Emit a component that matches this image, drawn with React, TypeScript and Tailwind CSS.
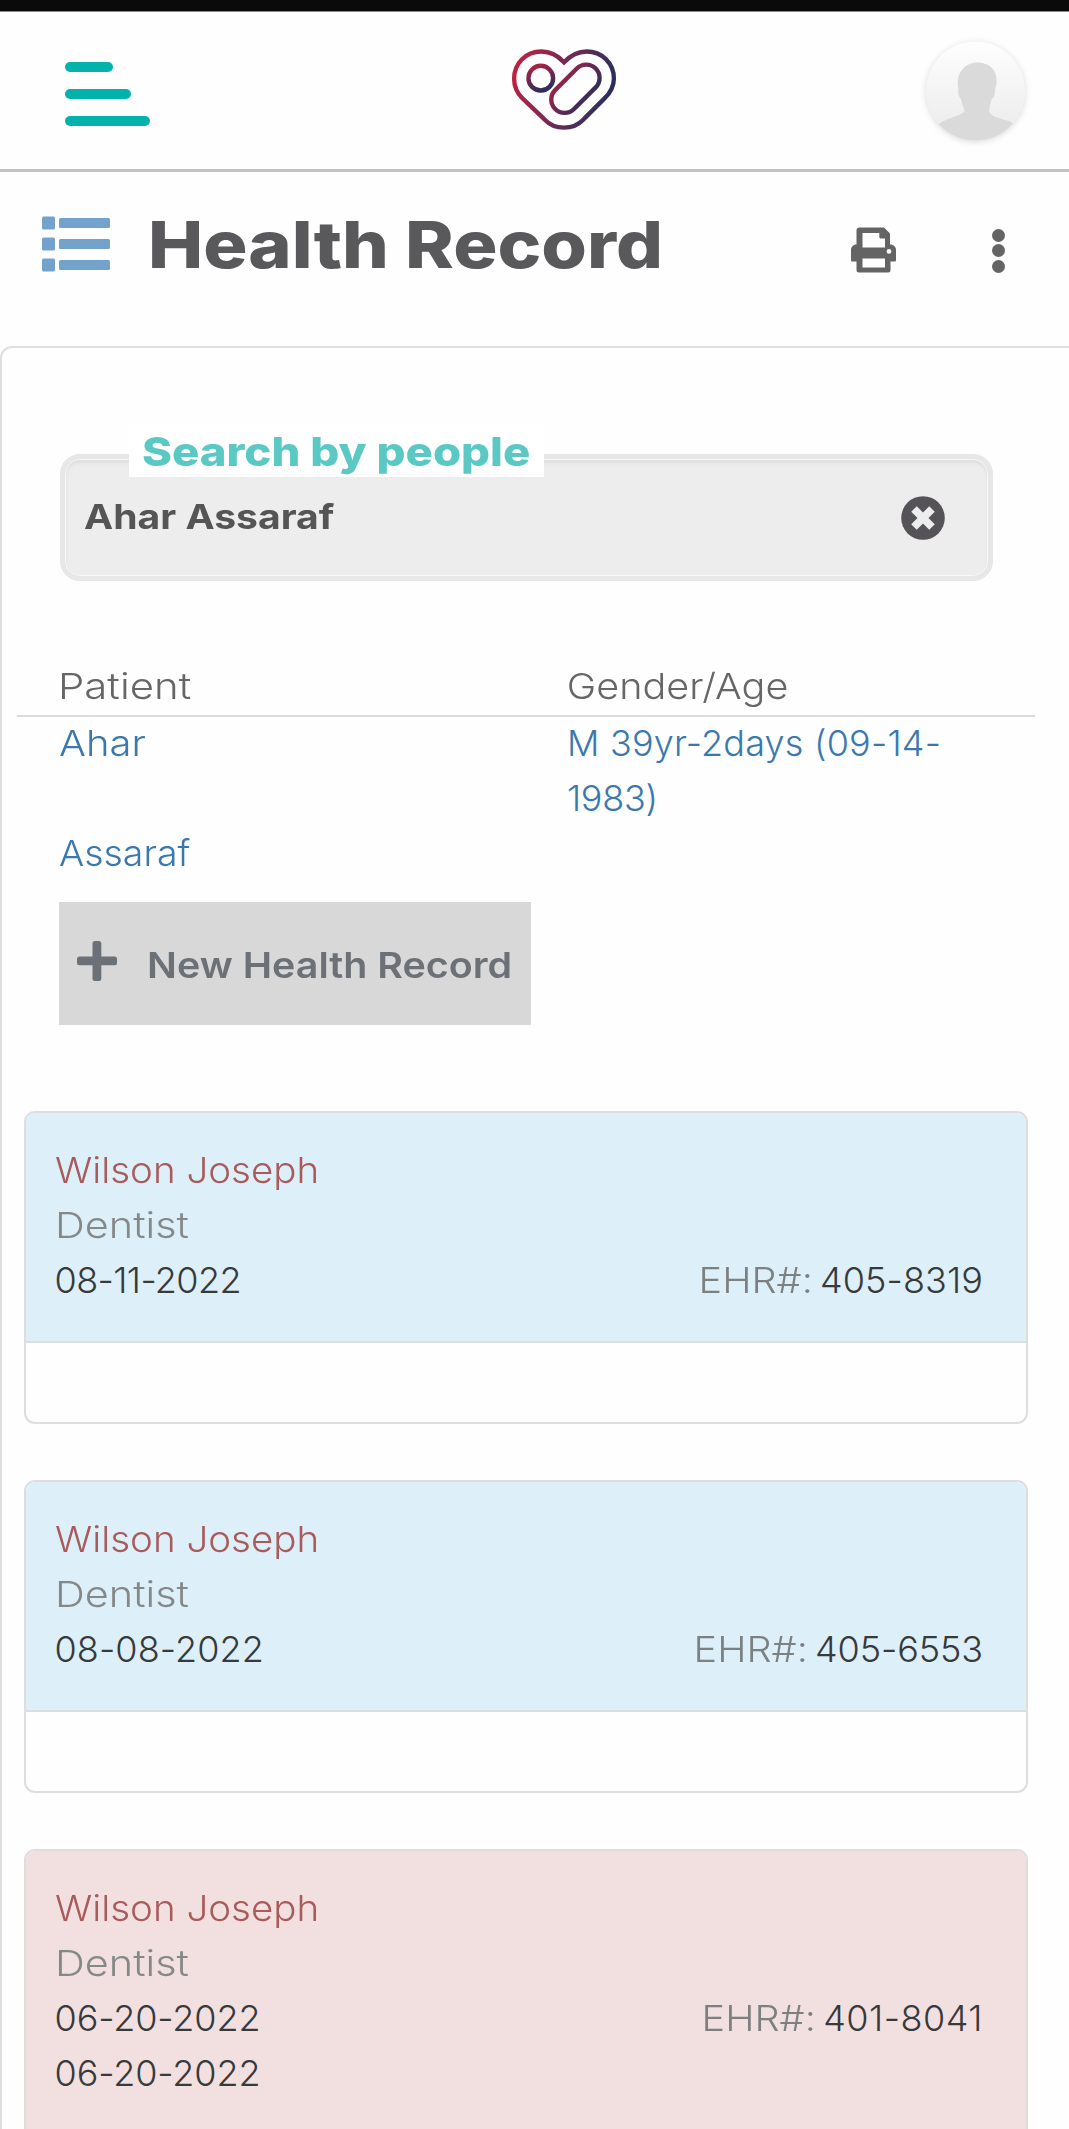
import React from 'react'

const records = [
  {
    doctor: 'Wilson Joseph',
    role: 'Dentist',
    dates: ['08-11-2022'],
    dateTracking: 'tracking-[-0.6px]',
    ehr: '405-8319',
    ehrTracking: 'tracking-[0.1px]',
    tone: 'bg-[#ddeff9]',
  },
  {
    doctor: 'Wilson Joseph',
    role: 'Dentist',
    dates: ['08-08-2022'],
    dateTracking: 'tracking-[0.1px]',
    ehr: '405-6553',
    ehrTracking: 'tracking-[-0.1px]',
    tone: 'bg-[#ddeff9]',
  },
  {
    doctor: 'Wilson Joseph',
    role: 'Dentist',
    dates: ['06-20-2022', '06-20-2022'],
    dateTracking: 'tracking-[-0.1px]',
    ehr: '401-8041',
    ehrTracking: 'tracking-[0.5px]',
    tone: 'bg-[#f2e0e0]',
  },
]

export default function App() {
  return (
    <div className="h-[2129px] w-[1069px] overflow-hidden bg-[#fefefe] font-['Inter','Liberation_Sans',sans-serif] text-[36px] leading-[55px] font-light">
      <div className="h-3 border-b border-[#8a8a8a] bg-[#0a0a0a]" />
      <TopBar />
      <TitleBar />
      <main className="h-[1900px] rounded-tl-[12px] border-t-[2px] border-l-[2px] border-[#dfdfdf]">
        <SearchField value="Ahar Assaraf" />
        <PatientTable />
        <button className="mt-[21px] ml-[57px] flex h-[123px] w-[472px] items-center bg-[#d8d8d8] pl-[18px] font-semibold text-[#6c7178]">
          <PlusIcon />
          <span className="mt-1 ml-[30px] origin-left scale-x-[1.095] whitespace-nowrap">New Health Record</span>
        </button>
        <div className="mt-[86px] ml-[21.5px] flex w-[1004.5px] flex-col gap-[56px]">
          {records.map((r, i) => (
            <RecordCard key={i} record={r} />
          ))}
        </div>
      </main>
    </div>
  )
}

function TopBar() {
  return (
    <header className="flex h-[160px] items-start justify-between border-b-[3px] border-[#c2c2c2] pr-[43px] pl-[65px]">
      <div className="mt-[50px] flex w-[446px] flex-col gap-[17px]">
        <span className="h-[10px] w-[48px] rounded-full bg-[#04b2ac]" />
        <span className="h-[10px] w-[66px] rounded-full bg-[#04b2ac]" />
        <span className="h-[10px] w-[85px] rounded-full bg-[#04b2ac]" />
      </div>
      <Logo />
      <div className="flex w-[409px] justify-end">
        <Avatar />
      </div>
    </header>
  )
}

function TitleBar() {
  return (
    <div className="flex h-[174px] items-start pl-[42px]">
      <ListIcon />
      <h1 className="mt-10 ml-[38px] w-[699px] text-[65px] leading-[65px] font-extrabold text-[#59595b]">
        <span className="inline-block origin-left scale-x-[1.135] whitespace-nowrap">Health Record</span>
      </h1>
      <PrintIcon />
      <div className="mt-[56.500px] ml-[96px] flex flex-col gap-[2.6px]">
        <span className="size-[13px] rounded-full bg-[#646464]" />
        <span className="size-[13px] rounded-full bg-[#646464]" />
        <span className="size-[13px] rounded-full bg-[#646464]" />
      </div>
    </div>
  )
}

function SearchField({ value }) {
  return (
    <div className="relative mt-[106px] ml-[57.500px] flex h-[127px] w-[933px] rounded-[20px] border-[5px] border-[#e7e7e7] bg-[#ededed] pt-[38px] pl-[19px] shadow-[inset_0_0_0_1px_#f8f8f8,inset_0_3px_3px_1px_#dfdfdf]">
      <label className="absolute -top-[34px] left-[64px] h-[52px] w-[415px] bg-white pl-[13px] text-[40px] leading-[54px] font-extrabold text-[#5ac9c3]">
        <span className="inline-block origin-left scale-x-[1.137] whitespace-nowrap">Search by people</span>
      </label>
      <span className="w-[817px] text-[34px] leading-[40px] font-bold text-[#555]">
        <span className="inline-block origin-left scale-x-[1.15]">{value}</span>
      </span>
      <svg className="-mt-px size-11" viewBox="0 0 44 44">
        <circle cx="22" cy="22" r="21.8" fill="#555357" />
        <path d="M13 13 31 31M31 13 13 31" stroke="#ededed" strokeWidth="7.8" />
      </svg>
    </div>
  )
}

function PatientTable() {
  return (
    <section className="mt-[78px] ml-[15px] w-[1018px]">
      <div className="grid h-[58px] grid-cols-2 border-b-2 border-[#dcdcdc] pl-[41px] text-[#666]">
        <span className="origin-left scale-x-[1.165]">Patient</span>
        <span className="origin-left scale-x-[1.1] pl-[18px]">Gender/Age</span>
      </div>
      <div className="-mt-px grid grid-cols-2 text-[#3a78ae]">
        <div className="flex flex-col gap-[55px] pl-[42px]">
          <span className="origin-left scale-x-[1.11]">Ahar</span>
          <span className="origin-left scale-x-[1.04]">Assaraf</span>
        </div>
        <div className="flex flex-col pl-[41px]">
          <span className="tracking-[0.2px]">M 39yr-2days (09-14-</span>
          <span className="tracking-[-0.3px]">1983)</span>
        </div>
      </div>
    </section>
  )
}

function RecordCard({ record }) {
  return (
    <article className="overflow-hidden rounded-[11px] border-2 border-[#dedede]">
      <div className={`border-b-2 border-[#d9dfe1] pt-[30px] pr-[43px] pb-[33px] pl-[29px] ${record.tone}`}>
        <div className="origin-left scale-x-[1.07] text-[#a95a5a]">{record.doctor}</div>
        <div className="origin-left scale-x-[1.15] text-[#858888]">{record.role}</div>
        <div className="flex items-start justify-between text-[#37393a]">
          <div className={`flex flex-col ${record.dateTracking}`}>
            {record.dates.map((d, i) => (
              <span key={i}>{d}</span>
            ))}
          </div>
          <div className="flex gap-[7px]">
            <span className="origin-right scale-x-[1.1] text-[#7d8081]">EHR#:</span>
            <span className={record.ehrTracking}>{record.ehr}</span>
          </div>
        </div>
      </div>
      <div className="h-[79px]" />
    </article>
  )
}

function Logo() {
  return (
    <svg className="mt-[37px] h-[82px] w-[106px] shrink-0" viewBox="0 0 106 83" fill="none" strokeWidth="4.4">
      <defs>
        <linearGradient id="heart" x1="0" y1="20" x2="106" y2="50" gradientUnits="userSpaceOnUse">
          <stop stopColor="#c3203f" />
          <stop offset="0.5" stopColor="#6b2c55" />
          <stop offset="1" stopColor="#1f2f5e" />
        </linearGradient>
        <linearGradient id="pill" x1="60" y1="14" x2="68" y2="66" gradientUnits="userSpaceOnUse">
          <stop stopColor="#b02244" />
          <stop offset="1" stopColor="#1f2f5e" />
        </linearGradient>
        <linearGradient id="dot" x1="24" y1="15" x2="34" y2="44" gradientUnits="userSpaceOnUse">
          <stop stopColor="#b02244" />
          <stop offset="1" stopColor="#1f2f5e" />
        </linearGradient>
      </defs>
      <path
        d="M53 13.5C45 4.500 37 2.500 30 2.500C14 2.500 2.500 15 2.500 30C2.500 39 6 45 11 50L33 71C44 82.500 62 82.500 73 71L94 50C100 44 103.500 38 103.500 30C103.500 14 91 2.500 76 2.500C67 2.500 60 6 53 13.500Z"
        stroke="url(#heart)"
        strokeLinejoin="miter"
      />
      <circle cx="29.500" cy="29.500" r="12.500" stroke="url(#dot)" />
      <rect x="36.500" y="27" width="58" height="27" rx="13.500" transform="rotate(-45 64.700 41.500)" stroke="url(#pill)" />
    </svg>
  )
}

function Avatar() {
  return (
    <svg className="mt-[29px] h-[106px] w-[101px] overflow-visible drop-shadow-[0_1px_3px_rgba(0,0,0,0.14)]" viewBox="0 0 101 106">
      <defs>
        <linearGradient id="avatar" x1="0" y1="0" x2="0" y2="1">
          <stop stopColor="#fefefe" />
          <stop offset="1" stopColor="#eaeaea" />
        </linearGradient>
        <clipPath id="avatarClip">
          <circle cx="50.500" cy="50" r="49.500" />
        </clipPath>
      </defs>
      <circle cx="50.500" cy="50" r="49.500" fill="url(#avatar)" />
      <path
        clipPath="url(#avatarClip)"
        d="M52 21.500C58 21.500 60 23 62 23.500C69 27 72 33 71.500 41C71.500 44 70.500 46 70 48.500C70.500 53 69 57 66.500 58C66 62 64.500 64 64.500 68C63 74 70 76 78 78.500C85 80 89 82 90 85V106H12V85C16 80 24 78 30 75.500C36 73 40 72 39.500 69C38 66 37 62 36 58C33.500 56 32.500 52 33.500 48.500C32.500 45 32.500 42 33 38C34.500 28 43 21.500 52 21.500Z"
        fill="#dadada"
      />
    </svg>
  )
}

function ListIcon() {
  return (
    <svg className="mt-[43.500px] h-[57px] w-[68px] shrink-0" viewBox="0 0 68 57" fill="#73a2cd">
      {[0, 21, 42].map((y) => (
        <g key={y}>
          <rect x="0" y={y + 0.5} width="13" height="13" rx="1.500" />
          <rect x="17" y={y + 2} width="51" height="10" rx="1.500" />
        </g>
      ))}
    </svg>
  )
}

function PrintIcon() {
  return (
    <svg className="mt-[55px] ml-1 h-[46px] w-[45px] shrink-0" viewBox="0 0 45 46" fill="#646464" fillRule="evenodd">
      <path d="M8.500 0.500H33L39 6.500V17.500C43 17.500 45 20 45 23V33.500Q45 34.500 44 34.500H39.500V43Q39.500 45.500 37 45.500H8Q5.500 45.500 5.500 43V34.500H1Q0 34.500 0 33.500V23C0 20 2 17.500 5.500 17.500V3.500Q5.500 0.500 8.500 0.500ZM11.500 6V20.500H34V11.500H30Q28.300 11.500 28.300 10V6ZM11.500 31.500V40.500H34V31.500ZM38 22A2.400 2.400 0 1 0 38 26.800A2.400 2.400 0 1 0 38 22Z" />
    </svg>
  )
}

function PlusIcon() {
  return (
    <svg className="-mt-[5px] size-10 shrink-0" viewBox="0 0 40 40" fill="#6c7178">
      <rect x="15.500" y="0" width="8.800" height="40" rx="2.500" />
      <rect x="0" y="15.500" width="40" height="8.800" rx="2.500" />
    </svg>
  )
}
